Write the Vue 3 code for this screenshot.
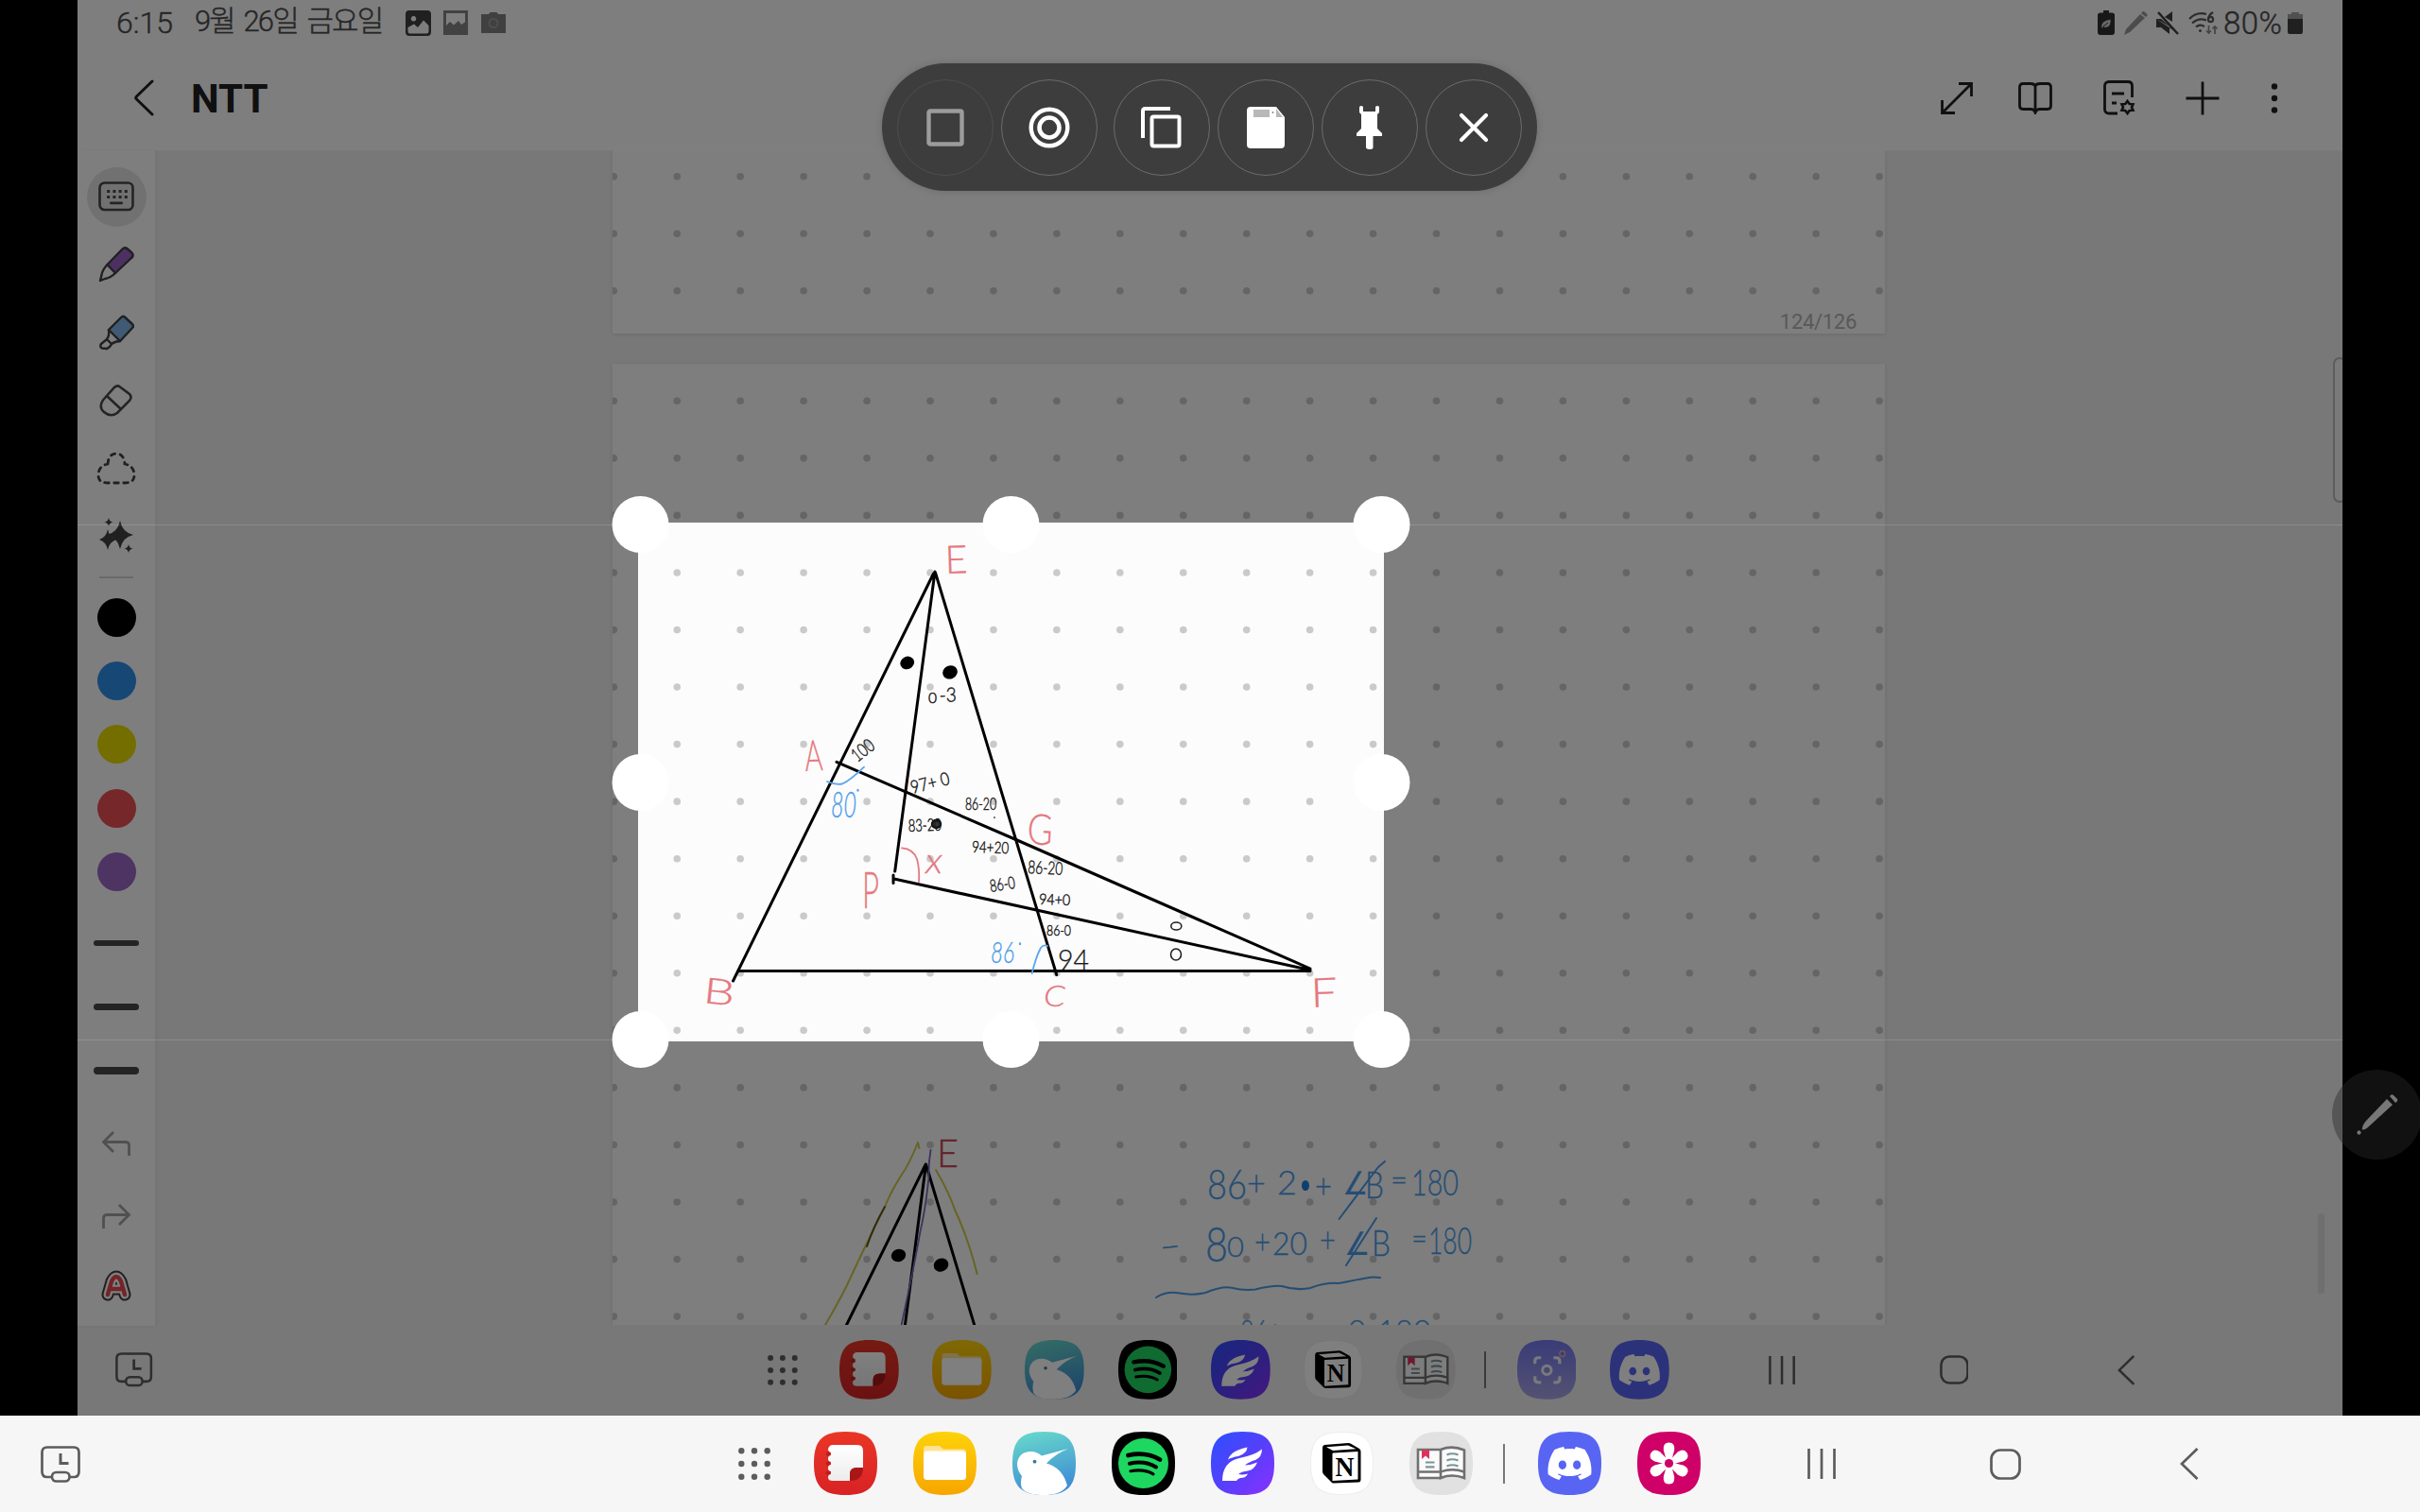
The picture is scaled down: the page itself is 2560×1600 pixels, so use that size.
<script setup>
const STEP_X = 66.94
const STEP_Y = 60.55

function dotGrid(firstY, rows) {
  const dots = []
  for (let r = 0; r < rows; r++) {
    for (let c = 0; c <= 20; c++) dots.push({ x: 1.3 + c * STEP_X, y: firstY + r * STEP_Y })
  }
  return dots
}

const upperDots = dotGrid(27.7, 3)
const lowerDots = dotGrid(39.3, 17)

const RED = '#e57880'
const BLUE = '#4a9be8'
const INK = '#1c1c1c'

/* Handwritten labels: t text, x left edge, y baseline, w width, s font size, r rotation */
const labels = [
  { t: 'E', x: 1000, y: 607, w: 24, s: 41, c: RED, r: -2 },
  { t: 'A', x: 852, y: 816, w: 19, s: 45, c: RED, r: -3 },
  { t: 'B', x: 743, y: 1061, w: 33, s: 38, c: RED, r: 6 },
  { t: 'C', x: 1104, y: 1065, w: 23, s: 32, c: RED, r: 0, i: 1 },
  { t: 'F', x: 1387, y: 1066, w: 28, s: 43, c: RED, r: -2 },
  { t: 'G', x: 1086, y: 893, w: 27, s: 45, c: RED, r: 3 },
  { t: 'P', x: 912, y: 961, w: 18, s: 54, c: RED, r: 0 },
  { t: 'x', x: 979, y: 924, w: 18, s: 37, c: RED, r: 0, i: 1 },
  { t: '80', x: 879, y: 865, w: 27, s: 38, c: BLUE, r: 0, i: 1 },
  { t: '86', x: 1048, y: 1019, w: 25, s: 31, c: BLUE, r: 0, i: 1 },
  { t: '0', x: 982, y: 744, w: 9, s: 15, c: INK, r: 0 },
  { t: '-3', x: 994, y: 743, w: 18, s: 21, c: INK, r: -2 },
  { t: '100', x: 907, y: 807, w: 25, s: 20, c: INK, r: -38 },
  { t: '97+ 0', x: 965, y: 840, w: 42, s: 19, c: INK, r: -14 },
  { t: '86-20', x: 1021, y: 857, w: 33, s: 18, c: INK, r: 0 },
  { t: '83-20', x: 961, y: 880, w: 35, s: 18, c: INK, r: -2 },
  { t: '94+20', x: 1028, y: 902, w: 39, s: 17, c: INK, r: 2 },
  { t: '86-20', x: 1087, y: 924, w: 37, s: 19, c: INK, r: 3 },
  { t: '86-0', x: 1048, y: 944, w: 27, s: 18, c: INK, r: -9 },
  { t: '94+0', x: 1099, y: 957, w: 33, s: 16, c: INK, r: 2 },
  { t: '86-0', x: 1107, y: 990, w: 26, s: 16, c: INK, r: 0 },
  { t: '94', x: 1119, y: 1026, w: 33, s: 30, c: INK, r: 0 },
  { t: 'E', x: 991, y: 1235, w: 23, s: 42, c: '#c84450', r: 0 },
  { t: '86', x: 1277, y: 1269, w: 42, s: 43, c: BLUE, r: 0 },
  { t: '+', x: 1319, y: 1265, w: 20, s: 38, c: BLUE, r: 0 },
  { t: '2', x: 1351, y: 1264, w: 21, s: 36, c: BLUE, r: 0 },
  { t: '+', x: 1391, y: 1268, w: 18, s: 36, c: BLUE, r: 0 },
  { t: '∠', x: 1420, y: 1264, w: 27, s: 34, c: BLUE, r: 0, n: 1 },
  { t: 'B', x: 1444, y: 1268, w: 20, s: 40, c: BLUE, r: 0 },
  { t: '=', x: 1471, y: 1260, w: 18, s: 32, c: BLUE, r: 0 },
  { t: '180', x: 1493, y: 1265, w: 50, s: 38, c: BLUE, r: 0 },
  { t: '-', x: 1227, y: 1331, w: 24, s: 34, c: BLUE, r: -6 },
  { t: '8', x: 1275, y: 1335, w: 24, s: 52, c: BLUE, r: 0 },
  { t: '0', x: 1298, y: 1330, w: 18, s: 30, c: BLUE, r: 0 },
  { t: '+', x: 1327, y: 1327, w: 17, s: 36, c: BLUE, r: 0 },
  { t: '20', x: 1346, y: 1328, w: 37, s: 34, c: BLUE, r: 0 },
  { t: '+', x: 1396, y: 1325, w: 17, s: 38, c: BLUE, r: 0 },
  { t: '∠', x: 1422, y: 1328, w: 27, s: 34, c: BLUE, r: 0, n: 1 },
  { t: 'B', x: 1451, y: 1329, w: 20, s: 38, c: BLUE, r: 0 },
  { t: '=', x: 1493, y: 1322, w: 17, s: 34, c: BLUE, r: 0 },
  { t: '180', x: 1511, y: 1327, w: 46, s: 39, c: BLUE, r: 0 },
  { t: '86+', x: 1312, y: 1421, w: 44, s: 34, c: BLUE, r: 0 },
  { t: '0-180', x: 1426, y: 1421, w: 88, s: 34, c: BLUE, r: 0 },
]

const palette = ['#000000', '#2f8fe8', '#e8dc00', '#ea4f53', '#9a68c4']
const strokes = [6, 7, 8]

const baseApps = ['notes', 'files', 'bird', 'spotify', 'feather', 'notion', 'book']
const bars = {
  inner: [...baseApps, 'divider', 'scan', 'discord'],
  outer: [...baseApps, 'divider', 'discord', 'flower'],
}
const petals = [0, 60, 120, 180, 240, 300]
const launcher = [0, 1, 2, 3, 4, 5, 6, 7, 8]
const handles = [
  [677.5, 555], [1069.5, 555], [1461.5, 555],
  [677.5, 828], [1461.5, 828],
  [677.5, 1100], [1069.5, 1100], [1461.5, 1100],
]
</script>

<template>
  <div class="display">
    <svg class="defs" width="0" height="0">
      <defs>
        <linearGradient id="g-notes" x1="0" y1="0" x2="0" y2="1"><stop offset="0" stop-color="#ea3626" /><stop offset="1" stop-color="#d82225" /></linearGradient>
        <linearGradient id="g-sheet" x1="0" y1="0" x2="0" y2="1"><stop offset="0" stop-color="#fff" /><stop offset="1" stop-color="#ececec" /></linearGradient>
        <linearGradient id="g-files" x1="0" y1="0" x2="0" y2="1"><stop offset="0" stop-color="#fdd20a" /><stop offset="1" stop-color="#f7a600" /></linearGradient>
        <linearGradient id="g-bird" x1="0" y1="0" x2=".25" y2="1"><stop offset="0" stop-color="#68dccb" /><stop offset=".5" stop-color="#55b5cf" /><stop offset="1" stop-color="#3f8ed6" /></linearGradient>
        <linearGradient id="g-feather" x1="0" y1="0" x2="1" y2="1"><stop offset="0" stop-color="#2c4fff" /><stop offset=".5" stop-color="#5540fb" /><stop offset="1" stop-color="#8a2fff" /></linearGradient>
        <linearGradient id="g-scan" x1="0" y1="0" x2="0" y2="1"><stop offset="0" stop-color="#7278f0" /><stop offset="1" stop-color="#a8a4e4" /></linearGradient>
      </defs>
    </svg>

    <div class="viewport">
      <header class="top">
        <div class="status">
          <span class="time">6:15</span>
          <span class="date">9월 26일 금요일</span>
          <svg class="st-a" width="27" height="27" viewBox="0 0 27 27"><path fill-rule="evenodd" fill="#404040" d="M4 0H23Q27 0 27 4V23Q27 27 23 27H4Q0 27 0 23V4Q0 0 4 0ZM2.500 18V22Q2.500 24.500 5 24.500H22Q24.500 24.500 24.500 22V16L19 10.500 13 18 9 14.500ZM8.500 6a2.800 2.800 0 1 0 .01 0Z" /></svg>
          <svg class="st-b" width="26" height="26" viewBox="0 0 26 26"><path fill-rule="evenodd" fill="#848484" d="M0 0H26V26H0ZM3 3V16L7 12 11 15.500 16 11 19 15 23 12.500V3Z" /></svg>
          <svg class="st-c" width="26" height="22" viewBox="0 0 26 22"><path fill="#808080" d="M0 2H8L9.500 0H16.500L18 2H26V22H0Z" /><circle cx="13" cy="11.500" r="4.500" fill="none" stroke="#9c9c9c" stroke-width="2" /></svg>
          <div class="status-right">
            <svg width="18" height="26" viewBox="0 0 18 26"><path fill="#303030" d="M6 0H12V2.500H15Q18 2.500 18 5V23Q18 26 15 26H3Q0 26 0 23V5Q0 2.500 3 2.500H6Z" /><path d="M4 19Q2 11 14 9Q15 18 8 18.500Q7 18.500 6 17.500L4 20ZM6 17L11 13" fill="#d5d5d5" stroke="#303030" stroke-width="1" /></svg>
            <svg width="25" height="25" viewBox="0 0 25 25"><path d="M0 25L2 19 17 3 22 7 6 22ZM18 2L20 0Q22 0 25 4L23 6Z" fill="#989898" /></svg>
            <svg width="25" height="25" viewBox="0 0 25 25"><path d="M0 8H5L24 24M0 8V17H5L14 24V16ZM9 6L17 0V11" fill="#404040" /><path d="M2 1L23 24" stroke="#404040" stroke-width="2.500" /></svg>
            <svg width="31" height="25" viewBox="0 0 31 25" fill="none" stroke="#585858" stroke-width="2.200"><path d="M1 8Q9 0 19 3M4 12.500Q11 6 19 9.500M8 16.500Q12 13 17 16" /><circle cx="12.500" cy="20.500" r="1.500" fill="#585858" stroke="none" /><path d="M26 1Q21 4 21 9" /><circle cx="23.500" cy="8.500" r="2.600" /><path d="M21.500 15V23M19 20.500L21.500 23 24 20.500M28 24V16M25.500 18.500L28 16 30.500 18.500" stroke="#888" stroke-width="1.700" /></svg>
            <span class="percent">80%</span>
            <svg width="16" height="23" viewBox="0 0 16 23"><path fill="#a0a0a0" d="M4 0H12V2H16V8H0V2H4Z" /><path fill="#404040" d="M0 7H16V21Q16 23 14 23H2Q0 23 0 21Z" /></svg>
          </div>
        </div>
        <div class="titlebar">
          <svg class="back" width="22" height="39" viewBox="0 0 22 39"><path d="M20 2L3.500 18Q2 19.500 3.500 21L20 37" fill="none" stroke="#202020" stroke-width="3" stroke-linecap="round" /></svg>
          <h1>NTT</h1>
          <div class="actions">
            <svg width="36" height="36" viewBox="0 0 36 36"><path d="M3 33L33 3M20 2.500H33.500V16M2.500 20V33.500H16" /></svg>
            <svg width="36" height="34" viewBox="0 0 36 34"><path d="M18 4Q17 1.500 13 1.500H5Q1.500 1.500 1.500 5V25Q1.500 28.500 5 28.500H13Q17 28.500 18 32Q19 28.500 23 28.500H31Q34.500 28.500 34.500 25V5Q34.500 1.500 31 1.500H23Q19 1.500 18 4V31" /></svg>
            <svg width="34" height="37" viewBox="0 0 34 37"><path d="M15 35H6Q1.500 35 1.500 30.500V6Q1.500 1.500 6 1.500H26Q30.500 1.500 30.500 6V18M9 14H22M9 24H14" /><path d="M25.500 22L27.700 25 31.500 25.300 30 28.500 31.500 31.700 27.700 32 25.500 35 23.300 32 19.500 31.700 21 28.500 19.500 25.300 23.300 25Z" stroke-width="2.600" /></svg>
            <svg width="38" height="38" viewBox="0 0 38 38"><path d="M19 1.500V36.500M1.500 19H36.500" /></svg>
            <svg class="more" width="8" height="32" viewBox="0 0 8 32"><circle cx="4" cy="3.500" r="3.200" /><circle cx="4" cy="16" r="3.200" /><circle cx="4" cy="28.500" r="3.200" /></svg>
          </div>
        </div>
      </header>

      <div class="workspace">
        <aside class="tools">
          <div class="tool key"><svg width="38" height="32" viewBox="0 0 38 32"><rect x="1.500" y="1.500" width="35" height="28.500" rx="5" fill="none" stroke="#484848" stroke-width="2.600" /><g fill="#484848"><rect v-for="n in 4" :key="n" :x="3 + n * 6.200" y="9" width="3" height="3" /><rect v-for="n in 4" :key="'b' + n" :x="3 + n * 6.200" y="15" width="3" height="3" /><rect x="12" y="21.500" width="14" height="2.800" rx="1.200" /></g></svg></div>
          <div class="tool"><svg width="38" height="38" viewBox="0 0 38 38" stroke="#404040" stroke-width="2.400" stroke-linejoin="round" stroke-linecap="round" fill="none"><path d="M9.500 19L25 3Q28 0 31 2.500L35.500 6.500Q38 9.500 35 12L18 28Z" fill="#9a60c4" /><path d="M9.500 19Q4 25 3.500 30L2 36 7 34Q13 33 18 28" /></svg></div>
          <div class="tool"><svg width="38" height="38" viewBox="0 0 38 38" stroke="#404040" stroke-width="2.400" stroke-linejoin="round" stroke-linecap="round" fill="none"><path d="M11 16L24 3Q26 1 28 2.500L36 10Q38 12 36 14L23 28Z" fill="#82b4e6" /><path d="M11 16Q12 22 9 26L14 31Q18 28 23 28M9 26L3 31Q1 34 4 35.500L9 36Q12 35 14 31" /></svg></div>
          <div class="tool"><svg width="36" height="36" viewBox="0 0 36 36" stroke="#484848" stroke-width="2.600" fill="none"><path d="M6 15L16 4Q19 1 22 3.500L32 11Q35 14 32 18L19 31Q12 36 5 30T6 15ZM8 13L23 27" /></svg></div>
          <div class="tool"><svg width="42" height="36" viewBox="0 0 42 36"><path d="M12 13Q13 2 21 2T30 13Q40 15 40 25Q40 33 30 33H12Q2 33 2 25Q2 15 12 13" fill="none" stroke="#404040" stroke-width="2.800" stroke-dasharray="4.500 5.500" stroke-linecap="round" /></svg></div>
          <div class="tool"><svg width="36" height="40" viewBox="0 0 36 40" fill="#404040"><path d="M22 3Q24.500 15.500 36 18Q24.500 20.500 22 33Q19.500 20.500 8 18Q19.500 15.500 22 3ZM9 12Q10.500 20.500 18 23Q10.500 25.500 9 34Q7.500 25.500 0 23Q7.500 20.500 9 12ZM10 0Q10.800 4 14.500 4.500Q10.800 5 10 9Q9.200 5 5.500 4.500Q9.200 4 10 0ZM31 28Q31.800 32 35.500 32.500Q31.800 33 31 37Q30.200 33 26.500 32.500Q30.200 32 31 28Z" /></svg></div>
          <div class="rule"></div>
          <div class="swatches"><i v-for="c in palette" :key="c" :style="{ background: c }"></i></div>
          <div class="widths"><b v-for="w in strokes" :key="w"><i :style="{ height: w + 'px' }"></i></b></div>
          <svg class="undo" width="32" height="28" viewBox="0 0 32 28"><path d="M13 2L2.500 12.500 13 23M3 12.500H26Q29.500 12.500 29.500 16V27" /></svg>
          <svg class="redo" width="32" height="28" viewBox="0 0 32 28"><path d="M19 2L29.500 12.500 19 23M29 12.500H6Q2.500 12.500 2.500 16V27" /></svg>
          <svg class="style-a" width="32" height="36" viewBox="0 0 32 36" fill="none" stroke-linecap="round" stroke-linejoin="round"><path d="M7 28L11 14Q16 4 21 14L25 28M10 22H22" stroke="#404040" stroke-width="13" /><path d="M7 28L11 14Q16 4 21 14L25 28M10 22H22" stroke="#fff" stroke-width="9" /><path d="M7 28L11 14Q16 4 21 14L25 28M10 22H22" stroke="#e84850" stroke-width="4.500" /></svg>
        </aside>

        <main class="canvas">
          <section class="page upper">
            <svg width="1346" height="194"><circle v-for="(d, i) in upperDots" :key="i" :cx="d.x" :cy="d.y" r="3.800" fill="#cacaca" /></svg>
            <span class="pageno">124/126</span>
          </section>
          <section class="page lower">
            <svg width="1346" height="1017"><circle v-for="(d, i) in lowerDots" :key="i" :cx="d.x" :cy="d.y" r="3.800" fill="#cacaca" /></svg>
          </section>

          <svg class="ink" viewBox="164 159 2314 1243" fill="none" stroke-linecap="round" stroke-linejoin="round">
            <g stroke="#000" stroke-width="3">
              <path d="M987.500 607L775.500 1038M989 605L946.700 922M989.500 606L1117.700 1031.500" />
              <path d="M885 806.300L1074.700 888.500L1386 1025M945.700 930L1386 1026.500M945 926V934.500M781 1027.500H1386" />
            </g>
            <ellipse cx="959.700" cy="701.400" rx="7.600" ry="6.600" transform="rotate(-25 959.700 701.400)" fill="#000" />
            <ellipse cx="1005" cy="711.400" rx="8" ry="7" transform="rotate(-25 1005 711.400)" fill="#000" />
            <ellipse cx="990.500" cy="872" rx="4.500" ry="4" fill="#333" stroke="#111" stroke-width="2.500" />
            <g stroke="#222" stroke-width="1.600"><ellipse cx="1244.300" cy="980" rx="5.500" ry="4" /><ellipse cx="1244" cy="1010" rx="5.500" ry="6" /></g>
            <g stroke="#5aa5ee" stroke-width="1.800">
              <path d="M875 827Q884 831 891 829.500Q899 826 914 811.600M1091.700 1030Q1096 1012 1101 1003Q1104 999 1108 1001" />
              <path d="M907.500 836v.5M1079 998.500v.4" stroke-width="2.400" />
            </g>
            <path d="M954 897.300Q966 898 970 909Q973 920 972 933" stroke="#e57880" stroke-width="1.800" />
            <path d="M1052 865v.3" stroke="#555" stroke-width="1.800" />

            <g stroke="#000" stroke-width="3"><path d="M979.300 1232L895 1403M979.500 1232L957.300 1403M979.500 1232L1031 1403" /></g>
            <ellipse cx="950.500" cy="1328.500" rx="7.800" ry="6.600" transform="rotate(-15 950.500 1328.500)" fill="#000" />
            <ellipse cx="995.500" cy="1338.600" rx="8" ry="6.900" transform="rotate(-25 995.500 1338.600)" fill="#000" />
            <path d="M972.500 1215L971 1209Q962 1232 952.600 1245Q942 1262 936 1277Q912 1325 896 1360Q886 1380 873 1402M990 1238Q1003 1260 1010 1280Q1024 1310 1033.700 1348" stroke="#cfc84a" stroke-width="2" />
            <path d="M936 1277Q924 1298 917 1319" stroke="#5c5a20" stroke-width="2" />
            <path d="M984.500 1217Q982 1232 982.400 1247Q979 1280 973.500 1303Q967 1340 953.600 1402" stroke="#7a68b8" stroke-width="1.800" />
            <g stroke="#4a9be8" stroke-width="2">
              <path d="M1465 1229L1458 1235 1416.500 1290M1456 1289L1424 1339" />
              <path d="M1223 1373Q1234 1366 1248 1368.500Q1262 1371 1275 1368Q1292 1361 1303 1362.700Q1316 1366 1328 1364.500Q1346 1360 1356 1361Q1372 1366 1386 1363Q1402 1357 1416 1358Q1436 1354 1445 1352.500Q1452 1351 1460 1352" />
            </g>
            <ellipse cx="1381" cy="1254.500" rx="4" ry="5.500" fill="#1f7fe0" />

            <text
              v-for="(l, i) in labels"
              :key="i"
              :x="l.x"
              :y="l.y"
              :font-size="l.s"
              :fill="l.c"
              :stroke="l.n ? 'none' : l.c"
              :stroke-width="l.s < 22 ? 0.5 : 0.3"
              :textLength="l.w"
              lengthAdjust="spacingAndGlyphs"
              :font-style="l.i ? 'italic' : 'normal'"
              :transform="`rotate(${l.r} ${l.x} ${l.y})`"
            >{{ l.t }}</text>
          </svg>
          <div class="edge-handle"></div>
          <div class="scroll-thumb"></div>
        </main>
      </div>

      <div class="bar-slot"></div>
      <div class="scrim"></div>
      <div class="guide g-top"></div>
      <div class="guide g-bottom"></div>
      <svg class="grips" viewBox="82 0 2396 1498"><circle v-for="(h, i) in handles" :key="i" :cx="h[0]" :cy="h[1]" r="30" fill="#fff" /></svg>

      <div class="pill">
        <button class="off"><svg width="40" height="40" viewBox="0 0 40 40"><rect x="2.500" y="2.500" width="35" height="35" rx="1.500" fill="none" stroke="#9c9c9c" stroke-width="4.400" /></svg></button>
        <button><svg width="44" height="44" viewBox="0 0 44 44" fill="none" stroke="#fff"><circle cx="22" cy="22" r="19.300" stroke-width="4.400" /><circle cx="22" cy="22" r="10.500" stroke-width="4.600" /></svg></button>
        <button class="wide"><svg width="44" height="44" viewBox="0 0 44 44" fill="none" stroke="#fff" stroke-width="4"><path d="M31 2H4.500Q2 2 2 4.500V33" /><rect x="11.500" y="10.500" width="29" height="31" rx="2" /></svg></button>
        <button><svg width="40" height="44" viewBox="0 0 40 44"><path d="M4 0H31L40 11V40Q40 44 36 44H4Q0 44 0 40V4Q0 0 4 0Z" fill="#fff" /><path d="M7 3H24V11H7ZM31 2L38 11H31Z" fill="#b8b8b8" /><circle cx="27.500" cy="6" r="1" fill="#888" /></svg></button>
        <button><svg width="28" height="46" viewBox="0 0 28 46" fill="#fff"><path d="M3 1.500Q3 0 5 0T7 1.500V6H20V1.500Q20 0 22 0T24 1.500V7L22 9V24L27 29V32H17.500V44Q17.500 46 14 46T10 44V32H0V29L5 24V9L3 7Z" /></svg></button>
        <button><svg width="32" height="32" viewBox="0 0 32 32"><path d="M3 3L29 29M29 3L3 29" stroke="#fff" stroke-width="4.200" stroke-linecap="round" /></svg></button>
      </div>
    </div>

    <nav v-for="(apps, name) in bars" :key="name" class="bar" :class="name">
      <svg class="device" viewBox="0 0 42 39" fill="none" stroke-width="2.700"><path d="M12 33H7Q1.500 33 1.500 27.500V7Q1.500 1.500 7 1.500H35Q40.500 1.500 40.500 7V27.500Q40.500 33 35 33H30" /><rect x="12" y="28" width="18.500" height="9.500" rx="4.500" /><path d="M21 8V18.500H29.500" stroke-width="3" /></svg>
      <svg class="launcher" viewBox="0 0 34 34"><circle v-for="n in launcher" :key="n" :cx="3.300 + (n % 3) * 13.700" :cy="3.300 + Math.floor(n / 3) * 13.700" r="3.200" /></svg>
      <div class="apps">
        <template v-for="a in apps" :key="a">
          <span v-if="a === 'divider'" class="divider"></span>
          <svg v-else class="app" viewBox="0 0 67 67">
            <g v-if="a === 'notes'">
              <path fill="url(#g-notes)" d="M33.500 0C58 0 67 9 67 33.500S58 67 33.500 67 0 58 0 33.500 9 0 33.500 0Z" />
              <path d="M20 14H46Q52 14 52 20V38H46Q38 38 38 45V52H20Q15 52 15 48.500T18 45V42Q15 42 15 38.500T18 35V32Q15 32 15 28.500T18 25V22Q15 21 15 18.500Q16 14 20 14Z" fill="url(#g-sheet)" />
              <path d="M38 52V45Q38 38 45 38H52Q52 52 38 52Z" fill="#a81718" />
              <g fill="#b82020"><circle cx="15" cy="23.500" r="2.200" /><circle cx="15" cy="33.500" r="2.200" /><circle cx="15" cy="43.500" r="2.200" /></g>
            </g>
            <g v-else-if="a === 'files'">
              <path fill="url(#g-files)" d="M33.500 0C58 0 67 9 67 33.500S58 67 33.500 67 0 58 0 33.500 9 0 33.500 0Z" />
              <path d="M11 26V18Q11 15 14 15H28L32 18.500H53Q56 18.500 56 22V26Z" fill="#ffe391" />
              <rect x="11" y="20.500" width="45" height="30.500" rx="3.500" fill="#fff" />
            </g>
            <g v-else-if="a === 'bird'">
              <path fill="url(#g-bird)" d="M33.500 0C58 0 67 9 67 33.500S58 67 33.500 67 0 58 0 33.500 9 0 33.500 0Z" />
              <path d="M5 34C6 24 13 21 19 21C24 21 28 23 31 25.500L59 18Q46 23 36 33.500C48 37 55 45 58 57C53 65 43 67 33.500 67S15 66 10 60Q8 54 10 47Q5 41 5 34Z" fill="#fff" />
              <circle cx="23.500" cy="31.700" r="1.900" fill="#3a7896" />
            </g>
            <g v-else-if="a === 'spotify'">
              <path d="M33.500 0C58 0 67 9 67 33.500S58 67 33.500 67 0 58 0 33.500 9 0 33.500 0Z" />
              <circle cx="33.500" cy="33.500" r="26.500" fill="#1ed760" />
              <path d="M17.500 25Q36 21 51 29.500" fill="none" stroke="#000" stroke-width="4.800" stroke-linecap="round" />
              <path d="M19 33.700Q35 30 47 37.500" fill="none" stroke="#000" stroke-width="4" stroke-linecap="round" />
              <path d="M20 41.700Q34 39 44 44.800" fill="none" stroke="#000" stroke-width="3.200" stroke-linecap="round" />
            </g>
            <g v-else-if="a === 'feather'">
              <path fill="url(#g-feather)" d="M33.500 0C58 0 67 9 67 33.500S58 67 33.500 67 0 58 0 33.500 9 0 33.500 0Z" />
              <path d="M18 29.500Q21 20 38.500 16.500Q38 23 29 26Q22 27 18 29.500ZM12 52Q12 32 30 28Q46 25 54 18.500Q54 27 47 30Q40 32 36 35.500Q42 35.500 49 32.500Q46 40 39 41.500Q32 42 29 45Q34 46 39 44.500Q37 49 31 49Q28 50 27 52Z" fill="#fff" />
            </g>
            <g v-else-if="a === 'notion'">
              <path fill="#fff" stroke="#ececec" stroke-width="1" d="M33.500 .5C58 .5 66.500 9 66.500 33.500S58 66.500 33.500 66.500 .5 58 .5 33.500 9 .5 33.500 .5Z" />
              <path d="M15 14L40 12Q42 12 43.500 13L52 18Q53.500 19 53.500 21V51Q53.500 53.500 51 53.600L25 54.500Q23 54.500 22 53L14 45Q13 43.500 13 42V17Q13 14.500 15 14Z" fill="#000" />
              <path d="M17 16.200L40 14.500 48.500 18.300 24 20ZM23.500 23Q23.500 22.500 24.500 22.400L50.500 21V50.500L23.500 52Z" fill="#fff" />
              <text x="26.500" y="47" font-size="30" textLength="20" lengthAdjust="spacingAndGlyphs" class="serif">N</text>
            </g>
            <g v-else-if="a === 'book'">
              <path fill="#e1e1e1" d="M33.500 0C58 0 67 9 67 33.500S58 67 33.500 67 0 58 0 33.500 9 0 33.500 0Z" />
              <path d="M9 19H33V49H9ZM33 19Q45 14 58 19.500V49Q45 44 33 49Z" fill="#fafafa" stroke="#707070" stroke-width="2.600" />
              <path d="M9 42.500H33Q45 38 58 42.500" fill="none" stroke="#707070" stroke-width="2.400" />
              <path d="M13 19.500H21V29L17 25.500 13 29Z" fill="#e0305c" />
              <g fill="none" stroke="#7a9496" stroke-width="2.200"><path d="M17 32.500H26.500M17 37.300H26.500M39.500 24.500Q45 22 51.500 24.500M39.500 30.500Q45 28 51.500 30.500M39.500 36.500Q45 34 51.500 36.500" /></g>
            </g>
            <g v-else-if="a === 'discord'">
              <path fill="#5865f2" d="M33.500 0C58 0 67 9 67 33.500S58 67 33.500 67 0 58 0 33.500 9 0 33.500 0Z" />
              <path transform="translate(10.500 10.500) scale(1.917)" fill="#fff" d="M20.317 4.3698a19.7913 19.7913 0 00-4.8851-1.5152.0741.0741 0 00-.0785.0371c-.211.3753-.4447.8648-.6083 1.2495-1.8447-.2762-3.68-.2762-5.4868 0-.1636-.3933-.4058-.8742-.6177-1.2495a.077.077 0 00-.0785-.037 19.7363 19.7363 0 00-4.8852 1.515.0699.0699 0 00-.0321.0277C.5334 9.0458-.319 13.5799.0992 18.0578a.0824.0824 0 00.0312.0561c2.0528 1.5076 4.0413 2.4228 5.9929 3.0294a.0777.0777 0 00.0842-.0276c.4616-.6304.8731-1.2952 1.226-1.9942a.076.076 0 00-.0416-.1057c-.6528-.2476-1.2743-.5495-1.8722-.8923a.077.077 0 01-.0076-.1277c.1258-.0943.2517-.1923.3718-.2914a.0743.0743 0 01.0776-.0105c3.9278 1.7933 8.18 1.7933 12.0614 0a.0739.0739 0 01.0785.0095c.1202.099.246.1981.3728.2924a.077.077 0 01-.0066.1276 12.2986 12.2986 0 01-1.873.8914.0766.0766 0 00-.0407.1067c.3604.698.7719 1.3628 1.225 1.9932a.076.076 0 00.0842.0286c1.961-.6067 3.9495-1.5219 6.0023-3.0294a.077.077 0 00.0313-.0552c.5004-5.177-.8382-9.6739-3.5485-13.6604a.061.061 0 00-.0312-.0286zM8.02 15.3312c-1.1825 0-2.1569-1.0857-2.1569-2.419 0-1.3332.9555-2.4189 2.157-2.4189 1.2108 0 2.1757 1.0952 2.1568 2.419 0 1.3332-.9555 2.4189-2.1569 2.4189zm7.9748 0c-1.1825 0-2.1569-1.0857-2.1569-2.419 0-1.3332.9554-2.4189 2.1569-2.4189 1.2108 0 2.1757 1.0952 2.1568 2.419 0 1.3332-.946 2.4189-2.1568 2.4189Z" />
            </g>
            <g v-else-if="a === 'flower'">
              <path fill="#cf0067" d="M33.500 0C58 0 67 9 67 33.500S58 67 33.500 67 0 58 0 33.500 9 0 33.500 0Z" />
              <path v-for="p in petals" :key="p" :transform="`rotate(${p} 33.500 33.500)`" d="M31.500 33L27.800 19.500Q27 11.500 33.500 11.500T39.200 19.500L35.500 33Z" fill="#fff" />
              <circle cx="33.500" cy="33.500" r="6" fill="#fff" />
              <circle cx="33.500" cy="33.500" r="4.600" fill="#cf0067" />
            </g>
            <g v-else>
              <path fill="url(#g-scan)" d="M33.500 0C58 0 67 9 67 33.500S58 67 33.500 67 0 58 0 33.500 9 0 33.500 0Z" />
              <path d="M27 20H24Q20 20 20 24V27M41 20H44Q48 20 48 24V27M27 48H24Q20 48 20 44V41M41 48H44Q48 48 48 44V41" fill="none" stroke="#f0f0fc" stroke-width="3.400" />
              <circle cx="33.500" cy="34" r="5" fill="none" stroke="#f0f0fc" stroke-width="3.200" />
              <circle cx="51" cy="15.500" r="3" fill="#6080d8" stroke="#e4a0c0" stroke-width="1.800" />
            </g>
          </svg>
        </template>
      </div>
      <svg class="recents" viewBox="0 0 30 32"><path d="M1.500 0V32M15 0V32M28.500 0V32" /></svg>
      <svg class="home" viewBox="0 0 33 33"><rect x="1.500" y="1.500" width="30" height="30" rx="9.500" /></svg>
      <svg class="navback" viewBox="0 0 20 34"><path d="M18.500 1L2 17 18.500 33" /></svg>
    </nav>

    <div class="bubble">
      <svg width="46" height="46" viewBox="0 0 46 46"><path d="M33 6L39 12 15 34Q10 39 7 38.500Q6 35 11 29ZM36 3Q38 0 40 2L44 6Q45 8 42 10ZM2 43a2 2 0 1 0 3-3 2 2 0 1 0-3 3Z" fill="#777" /></svg>
    </div>
  </div>
</template>

<style>
html, body { margin: 0; background: #000; }
</style>

<style scoped>
* { box-sizing: border-box; }
.display { position: relative; width: 2560px; height: 1600px; overflow: hidden; background: #000; font-family: Roboto, "Noto Sans CJK KR", sans-serif; }
.defs { position: absolute; }
.viewport { position: relative; width: 2396px; height: 1498px; margin-left: 82px; overflow: hidden; display: flex; flex-direction: column; background: #f1f1f1; }
svg { display: block; flex: none; }

.top { height: 159px; flex: none; background: #fdfdfd; border-bottom: 2px solid #fff; }
.status { display: flex; align-items: center; height: 48px; padding-left: 41px; color: #4c4c4c; font-size: 31px; white-space: nowrap; }
.time { width: 83px; font-size: 32px; font-weight: 300; -webkit-text-stroke: .4px #4c4c4c; }
.date { width: 223px; line-height: 36px; margin-top: -3px; font-weight: 300; font-size: 31px; letter-spacing: -1.900px; word-spacing: 4px; -webkit-text-stroke: .4px #4c4c4c; }
.st-b { margin-left: 13px; }
.st-c { margin-left: 14px; }
.status-right { display: flex; align-items: center; margin-left: auto; padding-right: 42px; }
.status-right svg:nth-child(2) { margin-left: 10px; }
.status-right svg:nth-child(3) { margin-left: 9px; }
.status-right svg:nth-child(4) { margin-left: 9px; }
.percent { width: 68px; margin-left: 6px; font-size: 33px; font-weight: 300; letter-spacing: .4px; -webkit-text-stroke: .4px #4c4c4c; }
.titlebar { display: flex; align-items: center; height: 111px; padding-left: 59px; }
.back { margin-bottom: 1px; }
h1 { margin: 2px 0 0 39px; font-size: 42px; line-height: 50px; font-weight: 700; color: #202020; }
.actions { display: flex; align-items: center; margin-left: auto; padding-right: 68px; }
.actions svg { fill: none; stroke: #202020; stroke-width: 2.800; }
.actions svg:nth-child(2) { margin-left: 47px; }
.actions svg:nth-child(3) { margin-left: 54px; }
.actions svg:nth-child(4) { margin-left: 52px; }
.actions svg.more { margin-left: 53px; fill: #202020; stroke: none; }

.workspace { flex: 1; display: flex; min-height: 0; }
.tools { width: 82px; height: 1244px; flex: none; background: #fdfdfd; display: flex; flex-direction: column; align-items: center; padding-top: 17.500px; box-shadow: 1px 0 4px rgba(0, 0, 0, .06); z-index: 1; }
.tool { width: 63px; height: 63px; margin-bottom: 9px; display: flex; align-items: center; justify-content: center; flex: none; }
.tool.key { border-radius: 50%; background: #e2e2e2; }
.rule { width: 36px; height: 2px; margin-top: 1px; background: #d4d4d4; flex: none; }
.swatches { display: flex; flex-direction: column; gap: 26.400px; margin-top: 21px; }
.swatches i { width: 41px; height: 41px; border-radius: 50%; }
.widths { display: flex; flex-direction: column; gap: 27.500px; margin-top: 34.500px; }
.widths b { width: 48px; height: 40px; display: flex; align-items: center; }
.widths i { width: 48px; border-radius: 5px; background: #484848; }
.undo, .redo { fill: none; stroke: #a0a0a0; stroke-width: 2.800; }
.undo { margin-top: 43px; }
.redo { margin-top: 49px; }
.style-a { margin-top: 41px; }

.canvas { position: relative; flex: 1; height: 1243px; overflow: hidden; background: #f0f0f0; display: flex; flex-direction: column; align-items: center; gap: 32px; }
.page { position: relative; width: 1346px; flex: none; background: #fcfcfc; box-shadow: 0 1px 4px rgba(0, 0, 0, .1); }
.page svg { overflow: hidden; }
.upper { height: 194px; }
.lower { height: 1017px; }
.pageno { position: absolute; right: 30px; bottom: -1px; font-size: 22px; line-height: 26px; color: #b2b2b2; letter-spacing: -.3px; }
.ink { position: absolute; inset: 0; width: 2314px; height: 1243px; font-family: Lato, "DejaVu Sans", sans-serif; font-weight: 300; }
.edge-handle { position: absolute; right: -4px; top: 219px; width: 14px; height: 154px; border: 2px solid #b8b8b8; border-radius: 7px; background: #f4f4f4; }
.scroll-thumb { position: absolute; right: 19px; top: 1125px; width: 7px; height: 85px; border-radius: 3px; background: #dedede; }
.bar-slot { height: 96px; flex: none; }

.scrim { position: absolute; left: 593px; top: 553px; width: 789px; height: 549px; box-shadow: 0 0 0 2600px rgba(0, 0, 0, .5); z-index: 2; }
.guide { position: absolute; left: 0; width: 2396px; height: 1px; background: rgba(255, 255, 255, .14); z-index: 3; }
.g-top { top: 555px; }
.g-bottom { top: 1100px; }
.grips { position: absolute; left: 0; top: 0; width: 2396px; height: 1498px; z-index: 4; }

.pill { position: absolute; left: 851px; top: 67px; width: 693px; height: 135px; border-radius: 68px; background: #3d3d3d; display: flex; align-items: center; gap: 8px; padding-left: 16px; z-index: 5; box-shadow: 0 0 8px rgba(0, 0, 0, .15); }
.pill button { width: 102px; height: 102px; padding: 0; border: 1.500px solid #6c6c6c; border-radius: 50%; background: none; display: flex; align-items: center; justify-content: center; flex: none; }
.pill .off { border-color: #4e4e4e; }
.pill .wide { margin-left: 8.500px; }

.bar { --u: 1px; display: flex; align-items: center; height: calc(var(--u) * 102); width: calc(var(--u) * 2560); background: #f6f6f6; color: #5c5c5c; }
.bar.inner { --u: .93594px; position: absolute; left: 82px; top: 1402px; background: #f0f0f0; }
.bar > svg { stroke: #5c5c5c; stroke-width: 2.700; fill: none; }
.bar .device { width: calc(var(--u) * 42); height: calc(var(--u) * 39); margin-left: calc(var(--u) * 43); }
.bar .launcher { width: calc(var(--u) * 34); height: calc(var(--u) * 34); margin-left: calc(var(--u) * 695.500); fill: #5c5c5c; stroke: none; }
.apps { display: flex; align-items: center; gap: calc(var(--u) * 38); margin-left: calc(var(--u) * 46.500); }
.app { width: calc(var(--u) * 67); height: calc(var(--u) * 67); margin-top: calc(var(--u) * -1); }
.divider { width: calc(var(--u) * 2); height: calc(var(--u) * 42); margin: 0 calc(var(--u) * -3) 0 calc(var(--u) * -6); background: #777; }
.recents { width: calc(var(--u) * 30); height: calc(var(--u) * 32); margin-left: calc(var(--u) * 113); }
.home { width: calc(var(--u) * 33); height: calc(var(--u) * 33); margin-left: calc(var(--u) * 162.500); }
.navback { width: calc(var(--u) * 20); height: calc(var(--u) * 34); margin-left: calc(var(--u) * 168); }
.serif { font-family: "Liberation Serif", serif; font-weight: 700; fill: #000; }

.bubble { position: absolute; left: 2467px; top: 1132px; width: 95px; height: 95px; border-radius: 50%; background: rgba(41, 41, 41, .42); display: flex; align-items: center; justify-content: center; z-index: 6; }
</style>
